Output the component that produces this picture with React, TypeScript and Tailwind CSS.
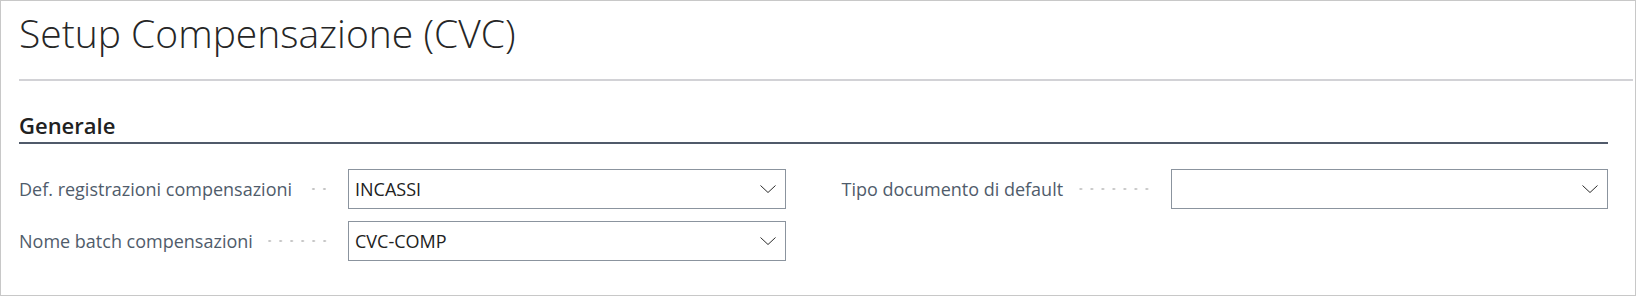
import React from 'react';

const Chevron = () => (
    <svg width="16" height="8" viewBox="0 0 16 8" fill="none" className="shrink-0">
        <path d="M0.5 0.5 L8 7.5 L15.5 0.5" stroke="#2b2b2b" strokeWidth="1" />
    </svg>
);

interface FieldProps {
    label: string;
    value?: string;
}

const Field: React.FC<FieldProps> = ({ label, value }) => (
    <div className="flex items-center h-[40px]">
        <div className="w-[329px] flex items-center shrink-0 pr-[18px]">
            <span className="text-[18px] leading-[24px] text-[#505c6b] whitespace-nowrap">{label}</span>
            <div className="flex-1 ml-[12px] h-[4px] bg-[radial-gradient(circle,#c4c4c4_1px,transparent_1.4px)] bg-[length:11px_4px] bg-repeat-x bg-right" />
        </div>
        <div className="flex-1 h-[40px] border border-[#8b949e] flex items-center justify-between pl-[6px] pr-[9px]">
            <span className="text-[18px] leading-[24px] text-[#212121]">{value}</span>
            <Chevron />
        </div>
    </div>
);

export default function App() {
    return (
        <div className="w-[1636px] h-[296px] border border-[#c8c8c8] bg-white font-['Open_Sans',sans-serif] overflow-hidden">
            <div className="pl-[18px] pt-[6px]">
                <h1 className="text-[39px] leading-[52px] font-light text-[#262626]">Setup Compensazione (CVC)</h1>
            </div>
            <div className="ml-[18px] mr-[2px] mt-[20px] h-[2px] bg-[#d2d2d6]" />
            <div className="pl-[18px] pr-[27px] pt-[30px]">
                <h2 className="text-[22px] leading-[28px] font-semibold text-[#212121]">Generale</h2>
                <div className="h-[2px] bg-[#505a6a] mt-[3px]" />
                <div className="grid grid-cols-2 gap-x-[56px] mt-[25px]">
                    <div className="flex flex-col gap-[12px]">
                        <Field label="Def. registrazioni compensazioni" value="INCASSI" />
                        <Field label="Nome batch compensazioni" value="CVC-COMP" />
                    </div>
                    <div className="flex flex-col gap-[12px]">
                        <Field label="Tipo documento di default" />
                    </div>
                </div>
            </div>
        </div>
    );
}
